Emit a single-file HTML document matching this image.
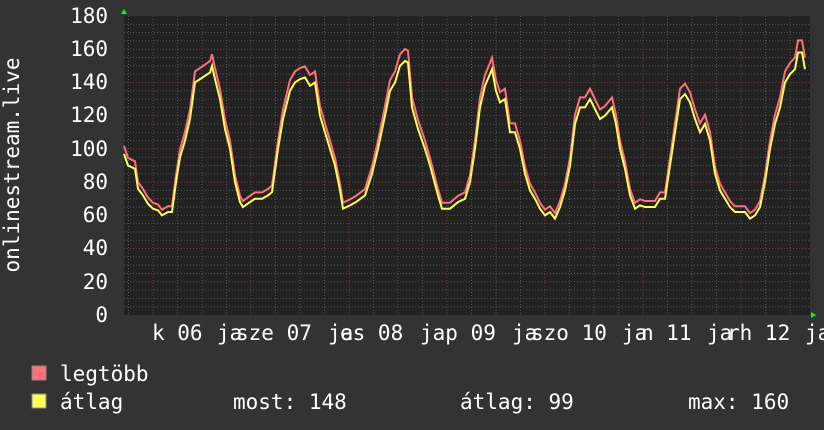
<!DOCTYPE html>
<html><head><meta charset="utf-8"><style>
html,body{margin:0;padding:0;background:#333;width:824px;height:430px;overflow:hidden}
svg{display:block}
text{font-family:"DejaVu Sans Mono","Liberation Mono",monospace;font-size:21px;fill:#fff}
</style></head><body>
<svg width="824" height="430" viewBox="0 0 824 430">
<rect x="0" y="0" width="824" height="430" fill="#333"/>
<rect x="124" y="16" width="686" height="299" fill="#222"/>
<g id="grid"></g>
<polyline id="pk" fill="none" stroke="#ff6f7a" stroke-width="2"/>
<polyline id="yl" fill="none" stroke="#ffff5a" stroke-width="2"/>
<polygon points="121,14 127,14 124,9" fill="#0f0"/>
<polygon points="811,312 811,318 816,315" fill="#0f0"/>
<g text-anchor="end">
<text x="108" y="23">180</text><text x="108" y="56">160</text><text x="108" y="89">140</text>
<text x="108" y="122">120</text><text x="108" y="156">100</text><text x="108" y="189">80</text>
<text x="108" y="222">60</text><text x="108" y="255">40</text><text x="108" y="289">20</text>
<text x="108" y="322">0</text>
</g>
<text transform="translate(19,165) rotate(-90)" text-anchor="middle">onlinestream.live</text>
<text x="152" y="340">k 06</text>
<text x="217" y="340">ja</text><text x="236" y="340">sze 07</text>
<text x="328" y="340">ja</text><text x="340" y="340">es 08</text>
<text x="420" y="340">jap 09</text>
<text x="512" y="340">ja</text><text x="531" y="340">szo 10</text>
<text x="622" y="340">ja</text><text x="641" y="340">n 11</text>
<text x="707" y="340">ja</text><text x="727" y="340">rh 12</text>
<text x="805" y="340">ja</text>
<rect x="32" y="366" width="14" height="14" fill="#ff6f7a" stroke="#888" stroke-width="1"/>
<rect x="32" y="394" width="14" height="14" fill="#ffff5a" stroke="#888" stroke-width="1"/>
<text x="60" y="381">legtöbb</text>
<text x="60" y="409">átlag</text>
<text x="233" y="409">most: 148</text>
<text x="460" y="409">átlag: 99</text>
<text x="688" y="409">max: 160</text>
</svg>
<script>
var g=document.getElementById('grid'),h="";
for(var v=5;v<180;v+=5){var y=315-v*1.661;var red=v%20==0;
h+='<line x1="124" x2="810" y1="'+y+'" y2="'+y+'" stroke="'+(red?'#7a3a3a':'#555')+'" stroke-dasharray="1,2"/>';}
for(var x=153-24.5;x<810;x+=24.5){if(x<125)continue;var red=Math.abs(((x-153)/98)-Math.round((x-153)/98))<0.01;
h+='<line y1="16" y2="315" x1="'+x+'" x2="'+x+'" stroke="'+(red?'#7a3a3a':'#555')+'" stroke-dasharray="1,2"/>';}
g.innerHTML=h;
var d=[124,97,128,90,135,88,138,76,143,72,148,67,153,64,158,63,162,60,168,62,172,62,176,80,180,95,185,105,190,118,195,140,200,142,205,144,210,146,212,150,215,142,220,130,225,112,230,100,235,80,240,68,243,65,250,68,255,70,262,70,268,72,272,74,278,100,283,118,290,135,295,140,300,142,305,143,310,138,315,140,320,120,325,110,330,100,335,90,340,75,343,64,350,66,356,68,365,72,372,85,378,100,385,120,390,135,395,140,400,150,405,153,408,152,412,125,418,112,425,100,430,90,438,72,442,64,450,64,458,68,465,70,470,80,475,100,480,125,485,138,490,145,492,148,496,135,500,128,505,130,510,110,515,110,520,100,525,85,530,75,535,70,540,64,545,60,550,62,555,58,560,65,565,75,570,90,575,115,580,125,585,125,590,130,595,124,600,118,605,120,612,125,616,115,620,100,625,88,630,72,635,64,640,66,645,65,650,65,655,65,660,70,665,70,670,90,675,110,680,130,685,133,690,128,695,118,700,110,705,115,710,105,715,85,720,75,725,70,730,65,735,62,740,62,745,62,750,58,755,60,760,65,765,80,770,100,775,115,780,125,785,140,790,145,795,148,798,158,802,158,805,148];
var a="",b="";
for(var i=0;i<d.length;i+=2){var x=d[i],v=d[i+1];var y=315-v*1.661;var yp=315-(v*1.04+1)*1.661;
a+=x+','+y+' ';b+=x+','+yp+' ';}
document.getElementById('yl').setAttribute('points',a);
document.getElementById('pk').setAttribute('points',b);
</script>
</body></html>
